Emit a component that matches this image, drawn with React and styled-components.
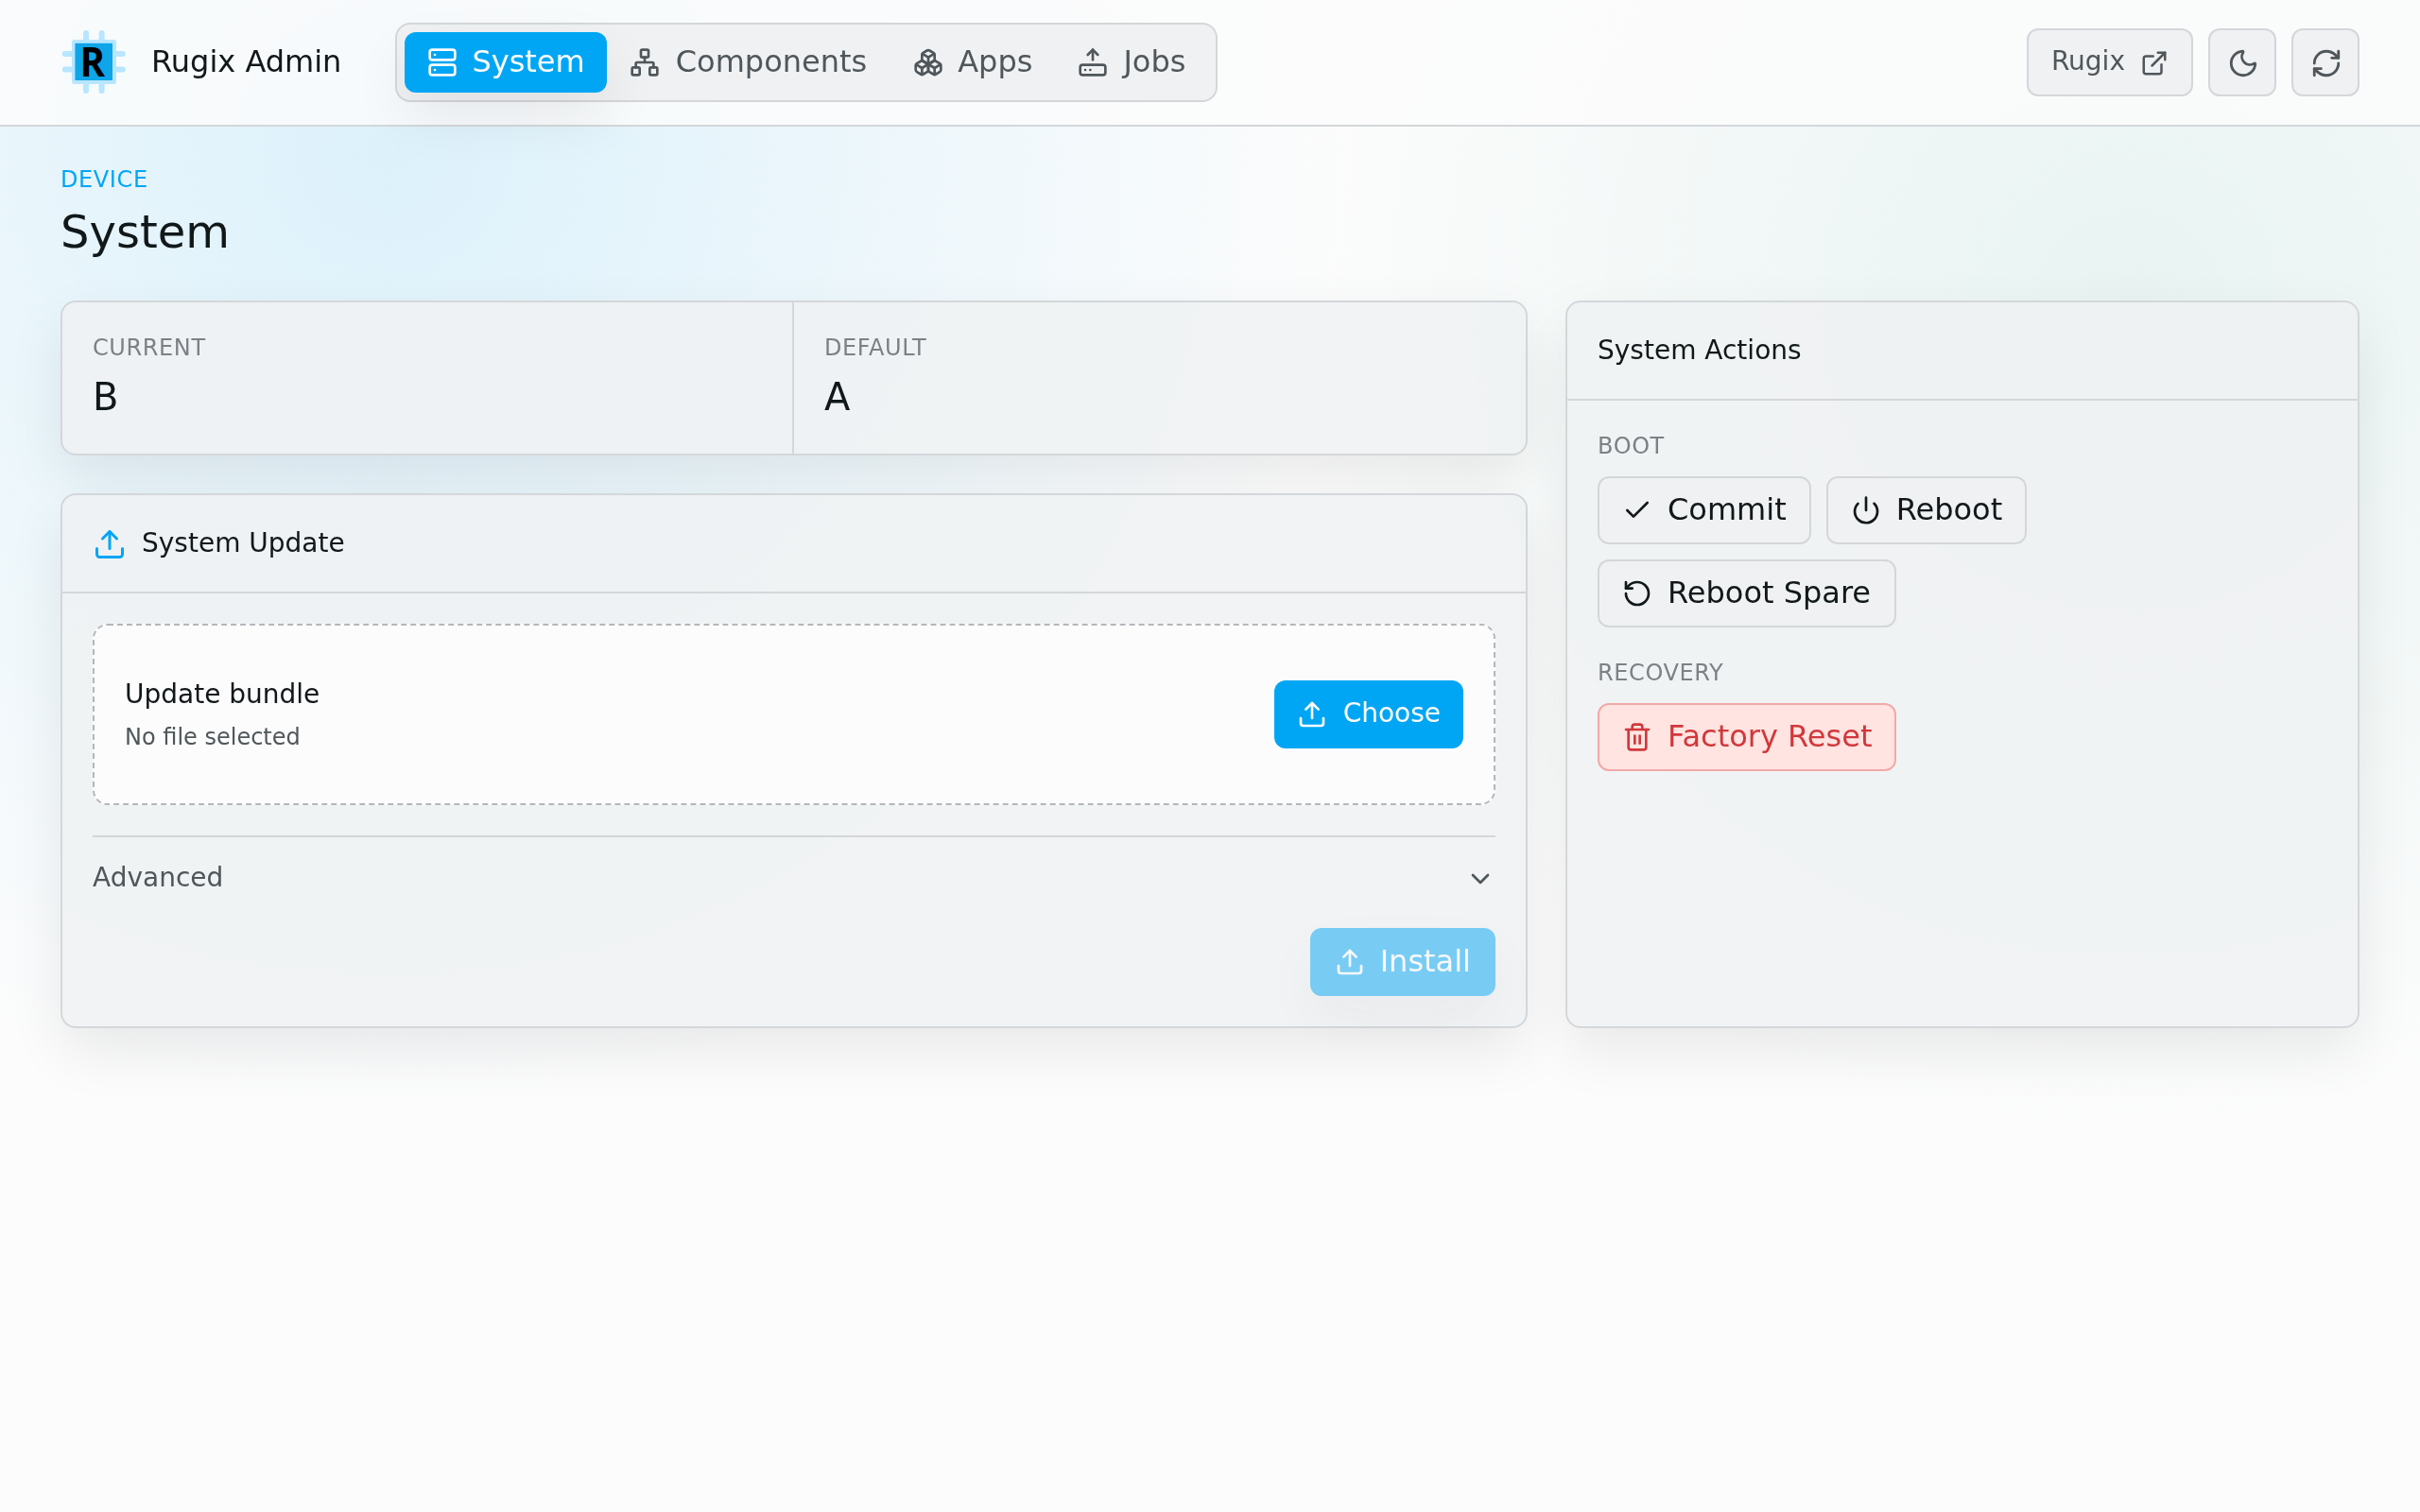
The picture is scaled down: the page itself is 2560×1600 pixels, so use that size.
import React, { useState } from 'react';
import styled, { createGlobalStyle, css } from 'styled-components';
import {
  Boxes,
  Check,
  ChevronDown,
  ExternalLink,
  HardDriveUpload,
  Moon,
  Network,
  Power,
  RefreshCw,
  RotateCcw,
  Server,
  Trash2,
  Upload,
} from 'lucide-react';

const tabs = [
  { id: 'system', label: 'System', icon: Server },
  { id: 'components', label: 'Components', icon: Network },
  { id: 'apps', label: 'Apps', icon: Boxes },
  { id: 'jobs', label: 'Jobs', icon: HardDriveUpload },
];

const slots = [
  { label: 'Current', value: 'B' },
  { label: 'Default', value: 'A' },
];

const bootActions = [
  { label: 'Commit', icon: Check },
  { label: 'Reboot', icon: Power },
  { label: 'Reboot Spare', icon: RotateCcw },
];

function Logo() {
  return (
    <svg width="36" height="36" viewBox="0 0 72 72" fill="none">
      <g stroke="#b8e6fe" strokeWidth="6" strokeLinecap="round">
        <path d="M27 5v61M43.6 5v61M4.8 27h61M4.8 43.6h61" />
      </g>
      <rect x="12" y="12" width="47" height="47" rx="2.5" fill="#b8e6fe" />
      <rect x="15.4" y="15.8" width="39.6" height="39.2" fill="#0ea5e9" />
      <text
        x="20.4"
        y="50.7"
        fill="#000"
        fontFamily="'Open Sans', sans-serif"
        fontWeight="700"
        fontSize="43"
        textLength="26.6"
        lengthAdjust="spacingAndGlyphs"
      >
        R
      </text>
    </svg>
  );
}

export default function App() {
  const [activeTab, setActiveTab] = useState('system');

  return (
    <Screen>
      <GlobalStyle />
      <Page>
        <Header>
          <Brand>
            <Logo />
            <span>Rugix Admin</span>
          </Brand>
          <Nav>
            {tabs.map(({ id, label, icon: Icon }) => (
              <NavItem key={id} $active={id === activeTab} onClick={() => setActiveTab(id)}>
                <Icon size={16} />
                {label}
              </NavItem>
            ))}
          </Nav>
          <HeaderActions>
            <HeaderButton>
              <SmallText>Rugix</SmallText>
              <ExternalLink size={15} />
            </HeaderButton>
            <HeaderButton $square aria-label="Toggle theme">
              <Moon size={17} />
            </HeaderButton>
            <HeaderButton $square aria-label="Refresh">
              <RefreshCw size={17} />
            </HeaderButton>
          </HeaderActions>
        </Header>

        <Main>
          <div>
            <Label $accent>Device</Label>
            <Title>System</Title>
          </div>
          <Columns>
            <Column>
              <Card>
                <Slots>
                  {slots.map((slot) => (
                    <Slot key={slot.label}>
                      <Label>{slot.label}</Label>
                      <SlotValue>{slot.value}</SlotValue>
                    </Slot>
                  ))}
                </Slots>
              </Card>

              <Card>
                <CardHeader>
                  <Upload size={18} />
                  <SmallText>System Update</SmallText>
                </CardHeader>
                <CardBody>
                  <DropZone>
                    <div>
                      <SmallText>Update bundle</SmallText>
                      <FileHint>No file selected</FileHint>
                    </div>
                    <ChooseButton>
                      <Upload size={16} />
                      <SmallText>Choose</SmallText>
                    </ChooseButton>
                  </DropZone>
                  <Advanced>
                    <SmallText>Advanced</SmallText>
                    <ChevronDown size={16} />
                  </Advanced>
                  <FormFooter>
                    <Button $variant="primary" disabled>
                      <Upload size={16} />
                      Install
                    </Button>
                  </FormFooter>
                </CardBody>
              </Card>
            </Column>

            <Card>
              <CardHeader>
                <SmallText>System Actions</SmallText>
              </CardHeader>
              <ActionsBody>
                <ActionGroup>
                  <Label>Boot</Label>
                  <ButtonRow>
                    {bootActions.map(({ label, icon: Icon }) => (
                      <Button key={label}>
                        <Icon size={16} />
                        {label}
                      </Button>
                    ))}
                  </ButtonRow>
                </ActionGroup>
                <ActionGroup>
                  <Label>Recovery</Label>
                  <ButtonRow>
                    <Button $variant="danger">
                      <Trash2 size={16} />
                      Factory Reset
                    </Button>
                  </ButtonRow>
                </ActionGroup>
              </ActionsBody>
            </Card>
          </Columns>
        </Main>
      </Page>
    </Screen>
  );
}

const GlobalStyle = createGlobalStyle`
  * {
    box-sizing: border-box;
  }
  body {
    margin: 0;
    background: #fcfcfc;
    color: #11181a;
    font-family: 'DejaVu Sans', sans-serif;
    font-size: 16px;
    line-height: 24px;
  }
  button {
    font: inherit;
    color: inherit;
    cursor: pointer;
  }
  svg {
    flex-shrink: 0;
    display: block;
  }
`;

const shadow = '0 12px 30px rgba(0, 0, 0, 0.08)';
const border = '1px solid #d4d7da';

const Screen = styled.div`
  height: 100vh;
  overflow: hidden;
`;

const Page = styled.div`
  width: 50vw;
  height: 50vh;
  transform: scale(2);
  transform-origin: 0 0;
  background:
    radial-gradient(circle at 16% 10%, rgba(0, 166, 244, 0.125), transparent 510px),
    radial-gradient(circle at 88% 20%, rgba(0, 150, 125, 0.078), transparent 450px),
    #fcfcfc;
`;

const Header = styled.header`
  display: flex;
  align-items: center;
  height: 67px;
  padding: 0 32px;
  border-bottom: ${border};
  background: rgba(252, 252, 252, 0.84);
`;

const Brand = styled.div`
  display: flex;
  align-items: center;
  gap: 12px;
  margin-right: 28px;
`;

const Nav = styled.nav`
  display: flex;
  padding: 4px;
  border: ${border};
  border-radius: 8px;
  background: #f0f1f3;
`;

const NavItem = styled.button`
  display: flex;
  align-items: center;
  gap: 8px;
  height: 32px;
  padding: 0 12px;
  border: 0;
  border-radius: 6px;
  background: transparent;
  color: #4f575b;
  ${(props) =>
    props.$active &&
    css`
      background: #00a6f4;
      color: #fcfcfc;
      box-shadow: ${shadow};
    `}
`;

const HeaderActions = styled.div`
  display: flex;
  gap: 8px;
  margin-left: auto;
`;

const HeaderButton = styled.button`
  display: flex;
  align-items: center;
  justify-content: center;
  gap: 8px;
  height: 36px;
  width: ${(props) => (props.$square ? '36px' : 'auto')};
  padding: ${(props) => (props.$square ? '0' : '0 12px')};
  border: ${border};
  border-radius: 6px;
  background: #f0f1f3;
  color: #4f575b;
  svg {
    margin-top: 1px;
    margin-left: ${(props) => (props.$square ? '1px' : '0')};
  }
`;

const SmallText = styled.span`
  display: block;
  padding-bottom: 2px;
  font-size: 14px;
  line-height: 18px;
`;

const Main = styled.main`
  display: flex;
  flex-direction: column;
  gap: 20px;
  padding: 20px 32px;
`;

const Label = styled.div`
  color: ${(props) => (props.$accent ? '#00a6f4' : '#7c8186')};
  font-size: 12px;
  line-height: 16px;
  letter-spacing: 0.3px;
  text-transform: uppercase;
`;

const Title = styled.h1`
  margin: 4px 0 0;
  font-size: 24px;
  font-weight: 400;
  line-height: 32px;
`;

const Columns = styled.div`
  display: grid;
  grid-template-columns: 1fr 420px;
  gap: 20px;
`;

const Column = styled.div`
  display: flex;
  flex-direction: column;
  gap: 20px;
`;

const Card = styled.section`
  border: ${border};
  border-radius: 8px;
  background: rgba(239, 241, 243, 0.88);
  box-shadow: ${shadow};
`;

const Slots = styled.div`
  display: grid;
  grid-template-columns: 1fr 1fr;
`;

const Slot = styled.div`
  padding: 16px;
  &:not(:last-child) {
    border-right: ${border};
  }
`;

const SlotValue = styled.div`
  margin-top: 4px;
  font-size: 20px;
  line-height: 28px;
`;

const CardHeader = styled.div`
  display: flex;
  align-items: center;
  gap: 8px;
  height: 52px;
  padding: 0 16px;
  border-bottom: ${border};
  svg {
    margin-top: 1px;
    color: #00a6f4;
  }
`;

const CardBody = styled.div`
  padding: 16px;
`;

const DropZone = styled.div`
  display: flex;
  align-items: center;
  justify-content: space-between;
  height: 96px;
  padding: 0 16px;
  border: 1px dashed #b4b7ba;
  border-radius: 8px;
  background: #fcfcfc;
`;

const FileHint = styled.div`
  margin-top: 4px;
  color: #4f575b;
  font-size: 12px;
  line-height: 16px;
`;

const ChooseButton = styled.button`
  display: flex;
  align-items: center;
  gap: 8px;
  height: 36px;
  padding: 0 12px;
  border: 0;
  border-radius: 6px;
  background: #00a6f4;
  color: #fcfcfc;
`;

const Advanced = styled.div`
  display: flex;
  align-items: center;
  justify-content: space-between;
  margin-top: 16px;
  padding-top: 12px;
  border-top: ${border};
  color: #4f575b;
`;

const FormFooter = styled.div`
  display: flex;
  justify-content: flex-end;
  margin-top: 16px;
`;

const variants = {
  plain: css`
    border-color: #d4d7da;
    background: #f0f1f3;
  `,
  primary: css`
    border-color: #00a6f4;
    background: #00a6f4;
    color: #fcfcfc;
    box-shadow: ${shadow};
  `,
  danger: css`
    border-color: #f2a9a7;
    background: #ffe4e1;
    color: #d1383b;
  `,
};

const Button = styled.button`
  display: flex;
  align-items: center;
  gap: 8px;
  height: 36px;
  padding: 0 12px;
  border: 1px solid;
  border-radius: 6px;
  ${(props) => variants[props.$variant || 'plain']}
  &:disabled {
    opacity: 0.5;
  }
`;

const ActionsBody = styled.div`
  display: flex;
  flex-direction: column;
  gap: 16px;
  padding: 16px;
`;

const ActionGroup = styled.div`
  display: flex;
  flex-direction: column;
  gap: 8px;
`;

const ButtonRow = styled.div`
  display: flex;
  flex-wrap: wrap;
  gap: 8px;
`;
